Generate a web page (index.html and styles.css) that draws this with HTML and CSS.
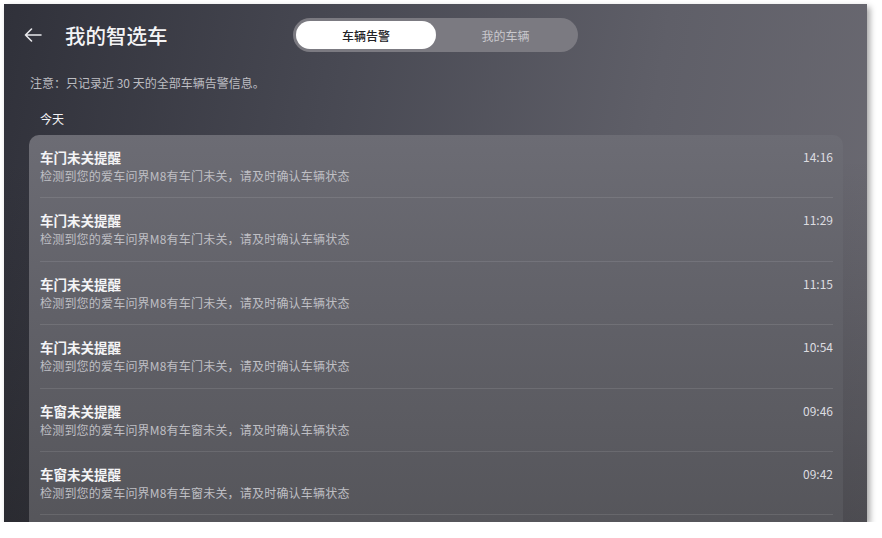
FILE: index.html
```html
<!DOCTYPE html>
<html lang="zh-CN">
<head>
  <meta charset="UTF-8">
  <meta name="viewport" content="width=device-width, initial-scale=1">
  <title>我的智选车</title>
  <link rel="stylesheet" href="styles.css">
</head>
<body>
  <div class="screen">
    <div class="header">
      <div class="header-left">
        <svg class="back" width="18" height="14" viewBox="0 0 18 14">
          <path d="M17 7H1.5M7.5 1L1.5 7l6 6" fill="none" stroke="#e8e8ec" stroke-width="1.6" stroke-linecap="round" stroke-linejoin="round"/>
        </svg>
        <h1 class="page-title">我的智选车</h1>
      </div>
      <div class="tabs">
        <div class="tab active">车辆告警</div>
        <div class="tab">我的车辆</div>
      </div>
      <div></div>
    </div>

    <p class="note">注意：只记录近 30 天的全部车辆告警信息。</p>
    <div class="day">今天</div>

    <div class="card">
      <div class="row">
        <div class="row-text">
          <div class="row-title">车门未关提醒</div>
          <div class="row-desc">检测到您的爱车问界M8有车门未关，请及时确认车辆状态</div>
        </div>
        <div class="row-time">14:16</div>
      </div>
      <div class="row">
        <div class="row-text">
          <div class="row-title">车门未关提醒</div>
          <div class="row-desc">检测到您的爱车问界M8有车门未关，请及时确认车辆状态</div>
        </div>
        <div class="row-time">11:29</div>
      </div>
      <div class="row">
        <div class="row-text">
          <div class="row-title">车门未关提醒</div>
          <div class="row-desc">检测到您的爱车问界M8有车门未关，请及时确认车辆状态</div>
        </div>
        <div class="row-time">11:15</div>
      </div>
      <div class="row">
        <div class="row-text">
          <div class="row-title">车门未关提醒</div>
          <div class="row-desc">检测到您的爱车问界M8有车门未关，请及时确认车辆状态</div>
        </div>
        <div class="row-time">10:54</div>
      </div>
      <div class="row">
        <div class="row-text">
          <div class="row-title">车窗未关提醒</div>
          <div class="row-desc">检测到您的爱车问界M8有车窗未关，请及时确认车辆状态</div>
        </div>
        <div class="row-time">09:46</div>
      </div>
      <div class="row">
        <div class="row-text">
          <div class="row-title">车窗未关提醒</div>
          <div class="row-desc">检测到您的爱车问界M8有车窗未关，请及时确认车辆状态</div>
        </div>
        <div class="row-time">09:42</div>
      </div>
    </div>
  </div>
</body>
</html>
```

FILE: styles.css
```css
body {
  margin: 0;
  background: #ffffff;
  font-family: "Noto Sans CJK SC", "Noto Sans", sans-serif;
}

.screen {
  width: 863px;
  height: 518px;
  margin: 4px 0 0 4px;
  overflow: hidden;
  color: #ffffff;
  background:
    linear-gradient(180deg, rgba(0, 0, 0, 0) 30%, rgba(20, 20, 20, 0.35) 100%),
    linear-gradient(100deg, #30313a 0%, #474852 35%, #5f5f68 70%, #6b6a72 100%);
  box-shadow: 3px 3px 6px rgba(0, 0, 0, 0.35);
}

.header {
  display: grid;
  grid-template-columns: 1fr auto 1fr;
  align-items: center;
  padding-top: 14px;
}

.header-left {
  display: flex;
  align-items: center;
  padding-left: 20px;
}

.back {
  display: block;
}

.page-title {
  margin: 0 0 0 23px;
  font-size: 20.5px;
  font-weight: 500;
  color: #f4f4f6;
  line-height: 28px;
}

.tabs {
  display: flex;
  width: 285px;
  height: 34px;
  box-sizing: border-box;
  padding: 3px;
  border-radius: 17px;
  background: #7b7a81;
}

.tab {
  flex: 1;
  display: flex;
  align-items: center;
  justify-content: center;
  border-radius: 14px;
  font-size: 12px;
  color: #c9c8cd;
}

.tab.active {
  flex: 0 0 140px;
  background: #ffffff;
  color: #222226;
  font-weight: 500;
}

.note {
  margin: 22px 0 0 26px;
  font-size: 12px;
  line-height: 18px;
  color: #bdbdc2;
}

.day {
  margin: 18px 0 0 36px;
  font-size: 12px;
  line-height: 18px;
  color: #f2f2f4;
}

.card {
  margin: 7px 24px 0 25px;
  padding-bottom: 20px;
  border-radius: 10px;
  background: linear-gradient(180deg, #6c6c74 0%, #616168 45%, #55555a 100%);
}

.row {
  display: flex;
  justify-content: space-between;
  align-items: flex-start;
  margin: 0 10px 0 11px;
  padding: 12px 0;
  height: 38.4px;
  border-bottom: 1px solid rgba(255, 255, 255, 0.1);
}

.row-title {
  font-size: 13.5px;
  font-weight: 700;
  line-height: 20px;
  color: #f4f4f6;
}

.row-desc {
  font-size: 12px;
  letter-spacing: 0.2px;
  line-height: 18px;
  color: #bfbfc4;
}

.row-time {
  font-size: 12px;
  line-height: 20px;
  color: #dcdce0;
}
```
